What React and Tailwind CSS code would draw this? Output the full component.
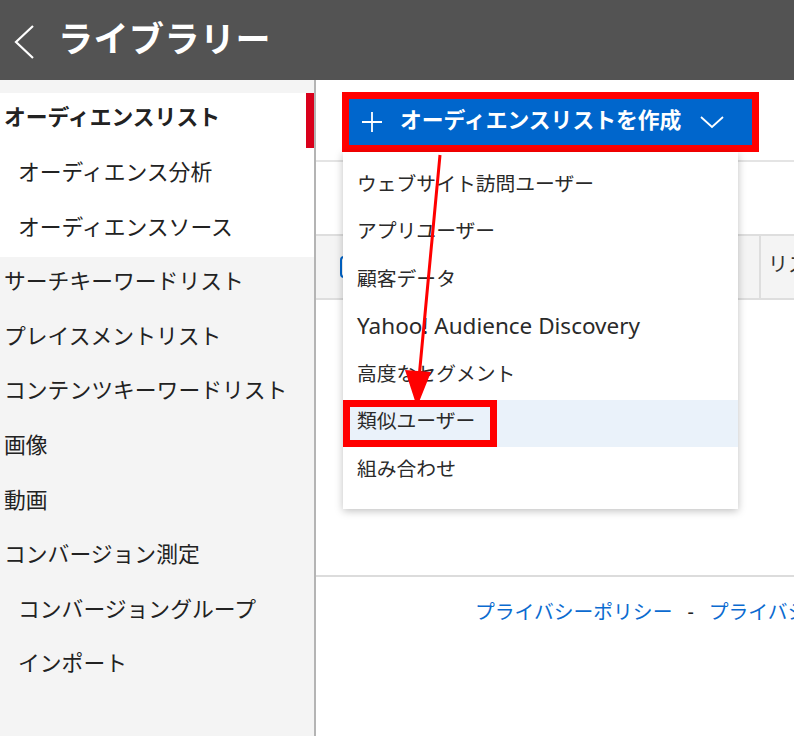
import React from 'react';

const SIDE_GROUP = [
  { label: 'オーディエンスリスト', active: true },
  { label: 'オーディエンス分析', sub: true },
  { label: 'オーディエンスソース', sub: true },
];

const SIDE_ITEMS = [
  { label: 'サーチキーワードリスト' },
  { label: 'プレイスメントリスト' },
  { label: 'コンテンツキーワードリスト' },
  { label: '画像' },
  { label: '動画' },
  { label: 'コンバージョン測定' },
  { label: 'コンバージョングループ', sub: true },
  { label: 'インポート', sub: true },
];

const MENU_ITEMS = [
  { label: 'ウェブサイト訪問ユーザー' },
  { label: 'アプリユーザー' },
  { label: '顧客データ' },
  { label: 'Yahoo! Audience Discovery', latin: true },
  { label: '高度なセグメント' },
  { label: '類似ユーザー', highlight: true },
  { label: '組み合わせ' },
];

function SideRow({ item }) {
  return (
    <div
      className={`h-[54.6px] flex items-center pb-[5px] ${item.sub ? 'pl-[18px]' : 'pl-[4px]'} ${
        item.active ? 'font-bold border-r-[8px] border-[#d9001b]' : ''
      }`}
    >
      <span className="text-[21.8px] text-[#222] whitespace-nowrap">{item.label}</span>
    </div>
  );
}

export default function App() {
  return (
    <div
      className="relative w-[794px] h-[736px] overflow-hidden bg-white"
      style={{ fontFamily: '"Noto Sans", "Noto Sans CJK JP", sans-serif' }}
    >
      {/* Header */}
      <div className="h-[80px] bg-[#535353] flex items-center pb-[4px]">
        <svg width="40" height="40" viewBox="0 0 40 40" className="ml-[5px] mt-[4px]">
          <polyline points="28,6 11,22 28,38" fill="none" stroke="#fff" strokeWidth="2.2" />
        </svg>
        <h1 className="ml-[13px] text-white font-bold text-[35px] tracking-[0.5px] leading-none">ライブラリー</h1>
      </div>

      <div className="flex h-[656px]">
        {/* Sidebar */}
        <aside className="w-[316px] shrink-0 bg-[#f4f4f4] border-r-[2px] border-[#b4b4b4] pt-[13px]">
          <div className="bg-white">
            {SIDE_GROUP.map((item) => (
              <SideRow key={item.label} item={item} />
            ))}
          </div>
          {SIDE_ITEMS.map((item) => (
            <SideRow key={item.label} item={item} />
          ))}
        </aside>

        {/* Main */}
        <main className="relative flex-1 flex flex-col">
          <div className="h-[82px] border-b-[2px] border-[#e4e4e4] pl-[26px] pt-[12px]">
            <div className="w-[417px] h-[60px] border-[7px] border-[#ff0000] bg-[#0066cc] flex items-center pb-[4px] text-white">
              <svg width="24" height="24" viewBox="0 0 24 24" className="ml-[11px] mt-[4px]">
                <path d="M12 2v20M2 12h20" stroke="#fff" strokeWidth="1.8" />
              </svg>
              <span className="ml-[16px] font-bold text-[21.8px] whitespace-nowrap">オーディエンスリストを作成</span>
              <svg width="26" height="16" viewBox="0 0 26 16" className="ml-[18px] mt-[4px]">
                <polyline points="2,3 13,13 24,3" fill="none" stroke="#fff" strokeWidth="1.8" />
              </svg>
            </div>
          </div>

          <div className="h-[72px]" />

          {/* Table header */}
          <div className="h-[66px] bg-[#f4f4f4] border-y-[2px] border-[#dedede] flex items-center">
            <div className="w-[443px] h-full flex items-center pl-[24px]">
              <div className="w-[22px] h-[22px] rounded-[4px] border-[2px] border-[#0066cc] bg-white" />
            </div>
            <div className="h-full border-l-[2px] border-[#dedede] flex items-center pl-[7px] pb-[4px]">
              <span className="text-[20px] text-[#333] whitespace-nowrap">リス</span>
            </div>
          </div>

          <div className="h-[277px] border-b-[2px] border-[#dcdcdc]" />

          {/* Footer */}
          <div className="pt-[20px] pl-[159px] flex items-center whitespace-nowrap text-[19.8px]">
            <span className="text-[#0b6bd0]">プライバシーポリシー</span>
            <span className="mx-[15px] text-[#222]">-</span>
            <span className="text-[#0b6bd0]">プライバシ</span>
          </div>

          {/* Dropdown menu */}
          <div className="absolute left-[27px] top-[72px] w-[395px] bg-white shadow-[0_2px_8px_rgba(0,0,0,0.25)] pt-[10px] pb-[14px]">
            {MENU_ITEMS.map((item) => (
              <div
                key={item.label}
                className={`relative h-[47.5px] flex items-center pl-[14px] pb-[4px] ${item.highlight ? 'bg-[#eaf2fa]' : ''}`}
              >
                <span
                  className={`${item.latin ? 'text-[22.5px]' : 'text-[19.8px]'} text-[#2a2a2a] whitespace-nowrap`}
                >
                  {item.label}
                </span>
                {item.highlight && (
                  <div className="absolute left-0 top-0 w-[154px] h-full border-[7px] border-[#ff0000]" />
                )}
              </div>
            ))}
          </div>
        </main>
      </div>

      {/* Annotation arrow */}
      <svg className="absolute left-0 top-0 pointer-events-none" width="794" height="736">
        <line x1="440" y1="155" x2="419" y2="378" stroke="#ff0000" strokeWidth="3" />
        <polygon points="405,370 431,372 417,407" fill="#ff0000" />
      </svg>
    </div>
  );
}
